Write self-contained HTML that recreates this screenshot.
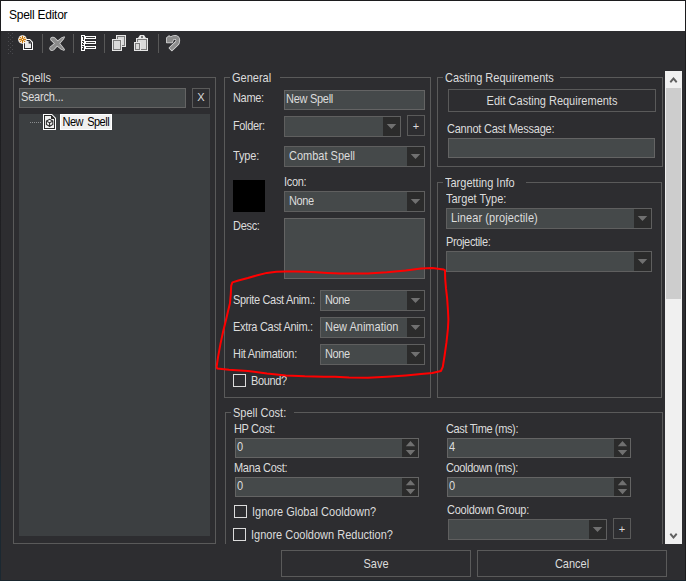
<!DOCTYPE html>
<html><head><meta charset="utf-8"><title>Spell Editor</title>
<style>
html,body{margin:0;padding:0;}
body{width:686px;height:581px;overflow:hidden;background:#2d2d30;font-family:"Liberation Sans",sans-serif;font-size:11px;color:#dcdcdc;position:relative;}
#win{position:absolute;left:0;top:0;width:686px;height:581px;background:#2d2d30;overflow:hidden;}
.abs{position:absolute;}
#title{left:1px;top:1px;width:684px;height:30px;background:#fff;color:#000;font-size:12px;letter-spacing:-0.25px;}
#title span{position:absolute;left:8px;top:7px;line-height:15px;}
.edge{background:#1c1c1e;}
.gb{position:absolute;border:1px solid #5a5a5a;box-sizing:border-box;}
.gb>.lg{position:absolute;top:-6px;left:5px;padding:0 9px 0 2px;background:#2d2d30;line-height:13px;white-space:nowrap;}
.gb>.lg span{display:inline-block;transform:scaleY(1.125);transform-origin:0 10px;}
.lbl{position:absolute;white-space:nowrap;line-height:13px;transform:scaleY(1.125);transform-origin:0 10px;}
.btn span{display:inline-block;transform:scaleY(1.125);transform-origin:0 62%;}
.tb{position:absolute;box-sizing:border-box;border:1px solid #646464;background:#45494a;white-space:nowrap;line-height:13px;}
.tb span{position:absolute;left:1px;top:2px;transform:scaleY(1.125);transform-origin:0 10px;}
.cb{position:absolute;box-sizing:border-box;border:1px solid #5f5f5f;background:#45494a;height:21px;white-space:nowrap;line-height:13px;}
.cb span{position:absolute;left:4px;top:3px;transform:scaleY(1.125);transform-origin:0 10px;}
.cb i{position:absolute;right:0;top:0;width:17px;height:19px;background:#2b2b2b;}
.cb i:after{content:"";position:absolute;left:3px;top:6px;width:11px;height:7px;background:#707070;clip-path:polygon(0.7px 0.9px,10.3px 0.9px,5.5px 6.1px);}
.btn{position:absolute;box-sizing:border-box;border:1px solid #5a5a5a;background:#2d2d30;text-align:center;white-space:nowrap;}
.chk{position:absolute;box-sizing:border-box;width:13px;height:13px;border:1px solid #dcdcdc;background:#2d2d30;}
.num{position:absolute;box-sizing:border-box;border:1px solid #646464;background:#45494a;height:20px;line-height:13px;}
.num span{position:absolute;left:1px;top:2px;transform:scaleY(1.125);transform-origin:0 10px;}
.num i{position:absolute;right:0;top:0;width:16px;height:18px;background:#2b2b2b;}
.num i:before{content:"";position:absolute;left:3px;top:1px;width:11px;height:7px;background:#707070;clip-path:polygon(0.8px 6.2px,10.2px 6.2px,5.5px 0.9px);}
.num i:after{content:"";position:absolute;left:3px;top:10px;width:11px;height:7px;background:#707070;clip-path:polygon(0.8px 1px,10.2px 1px,5.5px 6.2px);}
</style></head><body>
<div id="win">
<div class="abs edge" style="left:0;top:0;width:686px;height:1px"></div>
<div class="abs" style="left:0;top:0;width:1px;height:581px;background:linear-gradient(#1c1c1e 0,#222226 78%,#1b2831 82%,#1b2831 100%)"></div>
<div class="abs edge" style="left:685px;top:0;width:1px;height:581px"></div>
<div class="abs" style="left:0;top:580px;width:686px;height:1px;background:#1a262e"></div>
<div class="abs" id="title"><span>Spell Editor</span></div>

<!-- toolbar -->
<svg class="abs" style="left:0;top:31px" width="200" height="26" viewBox="0 31 200 26">
 <g fill="#4a4a4e" shape-rendering="crispEdges"><rect x="8" y="33" width="1" height="1"/><rect x="12" y="33" width="1" height="1"/><rect x="10" y="35" width="1" height="1"/><rect x="8" y="37" width="1" height="1"/><rect x="12" y="37" width="1" height="1"/><rect x="10" y="39" width="1" height="1"/><rect x="8" y="41" width="1" height="1"/><rect x="12" y="41" width="1" height="1"/><rect x="10" y="43" width="1" height="1"/><rect x="8" y="45" width="1" height="1"/><rect x="12" y="45" width="1" height="1"/><rect x="10" y="47" width="1" height="1"/><rect x="8" y="49" width="1" height="1"/><rect x="12" y="49" width="1" height="1"/><rect x="10" y="51" width="1" height="1"/><rect x="8" y="53" width="1" height="1"/><rect x="12" y="53" width="1" height="1"/></g>
 <g shape-rendering="crispEdges" fill="#585858">
  <rect x="42" y="34" width="1" height="19"/><rect x="73" y="34" width="1" height="19"/><rect x="104" y="34" width="1" height="19"/><rect x="158" y="34" width="1" height="19"/>
 </g>
 <!-- new -->
 <polygon points="23,39 30,39 33,42 33,50 23,50" fill="#fff"/>
 <polygon points="24,40 29.6,40 32,42.4 32,49 24,49" fill="#2d2d30"/>
 <polygon points="25,41 29,41 31,43 31,48 25,48" fill="#ececec"/>
 <polygon points="28.6,40.6 31.4,43.4 28.6,43.4" fill="#2d2d30"/>
 <circle cx="22.5" cy="39.5" r="4.3" fill="#fff"/>
 <g stroke="#cc7a0c" stroke-width="1.3" stroke-linecap="round">
  <line x1="22.5" y1="36.4" x2="22.5" y2="42.6"/><line x1="19.4" y1="39.5" x2="25.6" y2="39.5"/>
 </g>
 <g fill="#cc7a0c"><circle cx="20.4" cy="37.4" r="0.75"/><circle cx="24.6" cy="37.4" r="0.75"/><circle cx="20.4" cy="41.6" r="0.75"/><circle cx="24.6" cy="41.6" r="0.75"/><circle cx="22.5" cy="39.5" r="1.6"/></g>
 <circle cx="22.5" cy="39.5" r="0.55" fill="#fff"/>
 <!-- delete X -->
 <g transform="translate(57.2 43.6) scale(0.9 0.87) translate(-57.2 -43.6)"><g fill="none" stroke="#d8d8d8" stroke-width="1.7" stroke-linejoin="round"><path d="M50.4,39.2 Q49.9,36.9 52,36.5 Q53.4,36.3 54.4,37.4 L58.2,41.6 L64.9,50.4 L64.7,50.9 L62,50 L56,44.9 Z"/><path d="M49.6,47.9 L56,42.3 L62,37.4 L64.9,36.1 L64,38 L57.6,45.6 L53,50.6 Q51.3,51.9 49.9,50.7 Q48.7,49.4 49.6,47.9 Z"/></g>
 <g fill="#8c8c8c"><path d="M50.4,39.2 Q49.9,36.9 52,36.5 Q53.4,36.3 54.4,37.4 L58.2,41.6 L64.9,50.4 L64.7,50.9 L62,50 L56,44.9 Z"/><path d="M49.6,47.9 L56,42.3 L62,37.4 L64.9,36.1 L64,38 L57.6,45.6 L53,50.6 Q51.3,51.9 49.9,50.7 Q48.7,49.4 49.6,47.9 Z"/></g>
</g>
 <!-- numbered list -->
 <g shape-rendering="crispEdges">
  <rect x="81" y="35" width="4" height="16" fill="#fff"/>
  <rect x="85" y="36" width="11" height="3" fill="#fff"/><rect x="85" y="41" width="11" height="3" fill="#fff"/><rect x="85" y="46" width="11" height="3" fill="#fff"/>
  <g fill="#3a3a3a">
   <rect x="86" y="37" width="9" height="1"/><rect x="86" y="42" width="9" height="1"/><rect x="86" y="47" width="9" height="1"/>
   <rect x="82" y="36" width="2" height="1"/><rect x="83" y="37" width="1" height="3"/>
   <rect x="82" y="41" width="2" height="1"/><rect x="83" y="42" width="1" height="1"/><rect x="82" y="43" width="1" height="1"/><rect x="82" y="44" width="2" height="1"/>
   <rect x="82" y="46" width="2" height="1"/><rect x="83" y="47" width="1" height="3"/><rect x="82" y="48" width="1" height="1"/><rect x="82" y="49" width="2" height="1"/>
  </g>
 </g>
 <!-- copy -->
 <g shape-rendering="crispEdges">
  <rect x="116" y="35" width="10" height="12" fill="#e6e6e6"/><rect x="117" y="36" width="8" height="10" fill="#7a7a7a"/><rect x="118" y="37" width="6" height="8" fill="#dadada"/>
  <rect x="112" y="39" width="10" height="12" fill="#e6e6e6"/><rect x="113" y="40" width="8" height="10" fill="#7a7a7a"/><rect x="114" y="41" width="6" height="8" fill="#dadada"/>
 </g>
 <!-- paste -->
 <polygon points="136,38 138,38 140,35 144,35 146,38 148,38 148,51 136,51" fill="#e6e6e6"/>
 <g shape-rendering="crispEdges">
  <rect x="137" y="39" width="10" height="11" fill="#7a7a7a"/><rect x="138" y="40" width="8" height="9" fill="#dadada"/>
  <rect x="141" y="36" width="2" height="2" fill="#7a7a7a"/>
  <rect x="134" y="42" width="7" height="9" fill="#e6e6e6"/><rect x="135" y="43" width="5" height="7" fill="#7a7a7a"/><rect x="136" y="44" width="3" height="5" fill="#dadada"/>
 </g>
 <!-- undo -->
 <g transform="translate(173 43.1) scale(0.93) translate(-173 -43.1)">
 <path d="M166.3,42.4 L166.3,37.6 L168.8,35.4 L170,36.9 Q173,34.9 176.4,35.3 Q180.1,36.6 179.9,40.5 Q179.7,43.6 178,45.1 L171.8,50.9 L169.1,48.3 L176,41.8 Q177.3,40 175.9,39 Q174.6,38.3 173.3,39.1 L172,42.4 Z" fill="none" stroke="#dcdcdc" stroke-width="1.6" stroke-linejoin="round"/>
 <path d="M166.3,42.4 L166.3,37.6 L168.8,35.4 L170,36.9 Q173,34.9 176.4,35.3 Q180.1,36.6 179.9,40.5 Q179.7,43.6 178,45.1 L171.8,50.9 L169.1,48.3 L176,41.8 Q177.3,40 175.9,39 Q174.6,38.3 173.3,39.1 L172,42.4 Z" fill="#8c8c8c"/>
 </g>
</svg>

<!-- Spells group -->
<div class="gb" style="left:13px;top:77px;width:203px;height:467px"><div class="lg"><span>Spells</span></div></div>
<div class="tb" style="left:19px;top:88px;width:167px;height:20px"><span style="letter-spacing:-0.18px">Search...</span></div>
<div class="btn" style="left:192px;top:88px;width:18px;height:20px;line-height:17px"><span style="transform:none">X</span></div>
<div class="abs" style="left:19px;top:114px;width:191px;height:422px;background:#3c3f41"></div>
<svg class="abs" style="left:29px;top:114px" width="28" height="16" viewBox="29 114 28 16">
 <g fill="#8a8d8f" shape-rendering="crispEdges"><rect x="30" y="122" width="1" height="1"/><rect x="32" y="122" width="1" height="1"/><rect x="34" y="122" width="1" height="1"/><rect x="36" y="122" width="1" height="1"/><rect x="38" y="122" width="1" height="1"/><rect x="40" y="122" width="1" height="1"/></g>
 <polygon points="43,114 52,114 56,118 56,130 43,130" fill="#fff"/>
 <polygon points="44,115 51.6,115 55,118.4 55,129 44,129" fill="#2b2b2b"/>
 <polygon points="45,116 51,116 54,119 54,128 45,128" fill="#f0f0f0"/>
 <polygon points="51,115 55,118.9 51,118.9" fill="#2b2b2b"/>
 <g fill="none" stroke="#2b2b2b" stroke-width="1.05"><polygon points="49.6,119.3 52.8,121.1 52.8,124.5 49.6,126.3 46.4,124.5 46.4,121.1"/><path d="M49.6,126.3 V122.8 L46.4,121.1 M49.6,122.8 L52.8,121.1"/></g>
</svg>
<div class="abs" style="left:60px;top:114px;width:52px;height:16px;background:#f0f0f0;border:1px solid #fff;color:#000;line-height:14px;box-sizing:border-box;padding-left:1.5px;white-space:nowrap"><span style="display:inline-block;transform:scaleY(1.125);transform-origin:0 75%;letter-spacing:-0.5px;word-spacing:1.6px">New Spell</span></div>

<!-- General group -->
<div class="gb" style="left:224px;top:77px;width:207px;height:321px"><div class="lg"><span>General</span></div></div>
<div class="lbl" style="left:233px;top:92px;letter-spacing:-0.34px">Name:</div>
<div class="tb" style="left:284px;top:90px;width:141px;height:20px"><span style="letter-spacing:-0.28px">New Spell</span></div>
<div class="lbl" style="left:233px;top:120px;letter-spacing:-0.36px">Folder:</div>
<div class="cb" style="left:284px;top:116px;width:117px"><i></i></div>
<div class="btn" style="left:407px;top:115px;width:18px;height:21px;line-height:20px"><span style="transform:none">+</span></div>
<div class="lbl" style="left:233px;top:150px;letter-spacing:-0.16px">Type:</div>
<div class="cb" style="left:284px;top:146px;width:141px"><span>Combat Spell</span><i></i></div>
<div class="abs" style="left:233px;top:180px;width:32px;height:32px;background:#000"></div>
<div class="lbl" style="left:284px;top:176px;letter-spacing:-0.3px">Icon:</div>
<div class="cb" style="left:284px;top:191px;width:141px"><span style="letter-spacing:-0.4px">None</span><i></i></div>
<div class="lbl" style="left:233px;top:220px;letter-spacing:-0.3px">Desc:</div>
<div class="tb" style="left:284px;top:218px;width:141px;height:61px"></div>
<div class="lbl" style="left:233px;top:294px;letter-spacing:-0.33px">Sprite Cast Anim.:</div>
<div class="cb" style="left:320px;top:290px;width:105px"><span style="letter-spacing:-0.4px">None</span><i></i></div>
<div class="lbl" style="left:233px;top:321px;letter-spacing:-0.3px">Extra Cast Anim.:</div>
<div class="cb" style="left:320px;top:317px;width:105px"><span>New Animation</span><i></i></div>
<div class="lbl" style="left:233px;top:348px;letter-spacing:-0.28px">Hit Animation:</div>
<div class="cb" style="left:320px;top:344px;width:105px"><span style="letter-spacing:-0.4px">None</span><i></i></div>
<div class="chk" style="left:233px;top:374px"></div>
<div class="lbl" style="left:251px;top:375px;letter-spacing:-0.37px">Bound?</div>

<!-- Casting Requirements -->
<div class="gb" style="left:437px;top:77px;width:226px;height:90px"><div class="lg" style="padding-right:6px"><span>Casting Requirements</span></div></div>
<div class="btn" style="left:448px;top:89px;width:208px;height:23px;line-height:23px"><span>Edit Casting Requirements</span></div>
<div class="lbl" style="left:447px;top:123px;letter-spacing:-0.23px">Cannot Cast Message:</div>
<div class="tb" style="left:448px;top:138px;width:207px;height:20px"></div>

<!-- Targetting Info -->
<div class="gb" style="left:437px;top:182px;width:225px;height:216px"><div class="lg" style="padding-right:11px"><span>Targetting Info</span></div></div>
<div class="lbl" style="left:446px;top:193px">Target Type:</div>
<div class="cb" style="left:446px;top:208px;width:206px"><span style="letter-spacing:0.1px">Linear (projectile)</span><i></i></div>
<div class="lbl" style="left:446px;top:236px;letter-spacing:-0.36px">Projectile:</div>
<div class="cb" style="left:446px;top:251px;width:206px"><i></i></div>

<!-- Spell Cost (clipped) -->
<div class="abs" style="left:220px;top:400px;width:443px;height:144px;overflow:hidden">
 <div class="gb" style="left:5px;top:12px;width:438px;height:200px"><div class="lg" style="padding-right:8px"><span>Spell Cost:</span></div></div>
</div>
<div class="lbl" style="left:234px;top:423px;letter-spacing:-0.35px">HP Cost:</div>
<div class="num" style="left:235px;top:438px;width:184px"><span>0</span><i></i></div>
<div class="lbl" style="left:234px;top:462px;letter-spacing:-0.3px">Mana Cost:</div>
<div class="num" style="left:235px;top:477px;width:184px"><span>0</span><i></i></div>
<div class="chk" style="left:234px;top:505px"></div>
<div class="lbl" style="left:252px;top:506px">Ignore Global Cooldown?</div>
<div class="chk" style="left:233px;top:528px"></div>
<div class="lbl" style="left:251px;top:529px">Ignore Cooldown Reduction?</div>
<div class="lbl" style="left:446px;top:423px;letter-spacing:-0.37px">Cast Time (ms):</div>
<div class="num" style="left:447px;top:438px;width:184px"><span>4</span><i></i></div>
<div class="lbl" style="left:446px;top:462px;letter-spacing:-0.36px">Cooldown (ms):</div>
<div class="num" style="left:447px;top:477px;width:184px"><span>0</span><i></i></div>
<div class="lbl" style="left:447px;top:504px;letter-spacing:-0.24px">Cooldown Group:</div>
<div class="cb" style="left:448px;top:519px;width:159px"><i></i></div>
<div class="btn" style="left:613px;top:518px;width:18px;height:21px;line-height:20px"><span style="transform:none">+</span></div>

<!-- scrollbar -->
<div class="abs" style="left:665px;top:71px;width:17px;height:473px;background:#f0f0f0"></div>
<div class="abs" style="left:666px;top:88px;width:15px;height:211px;background:#cdcdcd"></div>
<svg class="abs" style="left:665px;top:71px" width="17" height="473" viewBox="665 71 17 473">
 <polygon points="673.5,76.9 677.4,81.4 676,82.9 673.5,80 671,82.9 669.6,81.4" fill="#606060"/>
 <polygon points="673.5,539.1 677.4,534.6 676,533.1 673.5,536 671,533.1 669.6,534.6" fill="#606060"/>
</svg>

<!-- bottom buttons -->
<div class="btn" style="left:281px;top:550px;width:190px;height:27px;line-height:27px"><span>Save</span></div>
<div class="btn" style="left:477px;top:550px;width:190px;height:27px;line-height:27px"><span>Cancel</span></div>

<!-- red annotation -->
<svg class="abs" style="left:200px;top:250px" width="270" height="150" viewBox="200 250 270 150">
 <path fill="none" stroke="#ff0000" stroke-width="2" stroke-linejoin="round" stroke-linecap="round" d="M232.4,282.4 L238.4,280.5 L247.9,278 L257.4,275.2 L266.9,272.9 L276.3,271.7 L285.8,271.4 L295.3,271.4 L304.8,271.7 L316.1,272.3 L327.5,272.9 L340,273.6 L349,273.6 L367.9,273.6 L386.9,272.3 L405.8,270.4 L421,268.5 L432.3,268.1 L443.7,269.5 L445,270.4 L445.2,279 L446,288.4 L447.1,297.9 L447.9,309.3 L448.4,319.5 L447.9,329 L446.5,342.2 L444.6,355.5 L442.8,366.9 L440.9,371 L432.3,372.9 L421,374.1 L405.8,375.4 L386.9,376.7 L367.9,377.7 L349,377.6 L335,376.8 L323.7,376.7 L304.8,376.3 L285.8,375.4 L266.9,373.5 L247.9,371 L229,369.7 L217.2,368.4 L216.6,366.9 L218,357.4 L220.4,344.1 L223.3,330.8 L226.1,319.5 L228,311.2 L229.9,303.6 L230.8,294.1 L231.2,285.6 Z"/>
</svg>

</div>
</body></html>
